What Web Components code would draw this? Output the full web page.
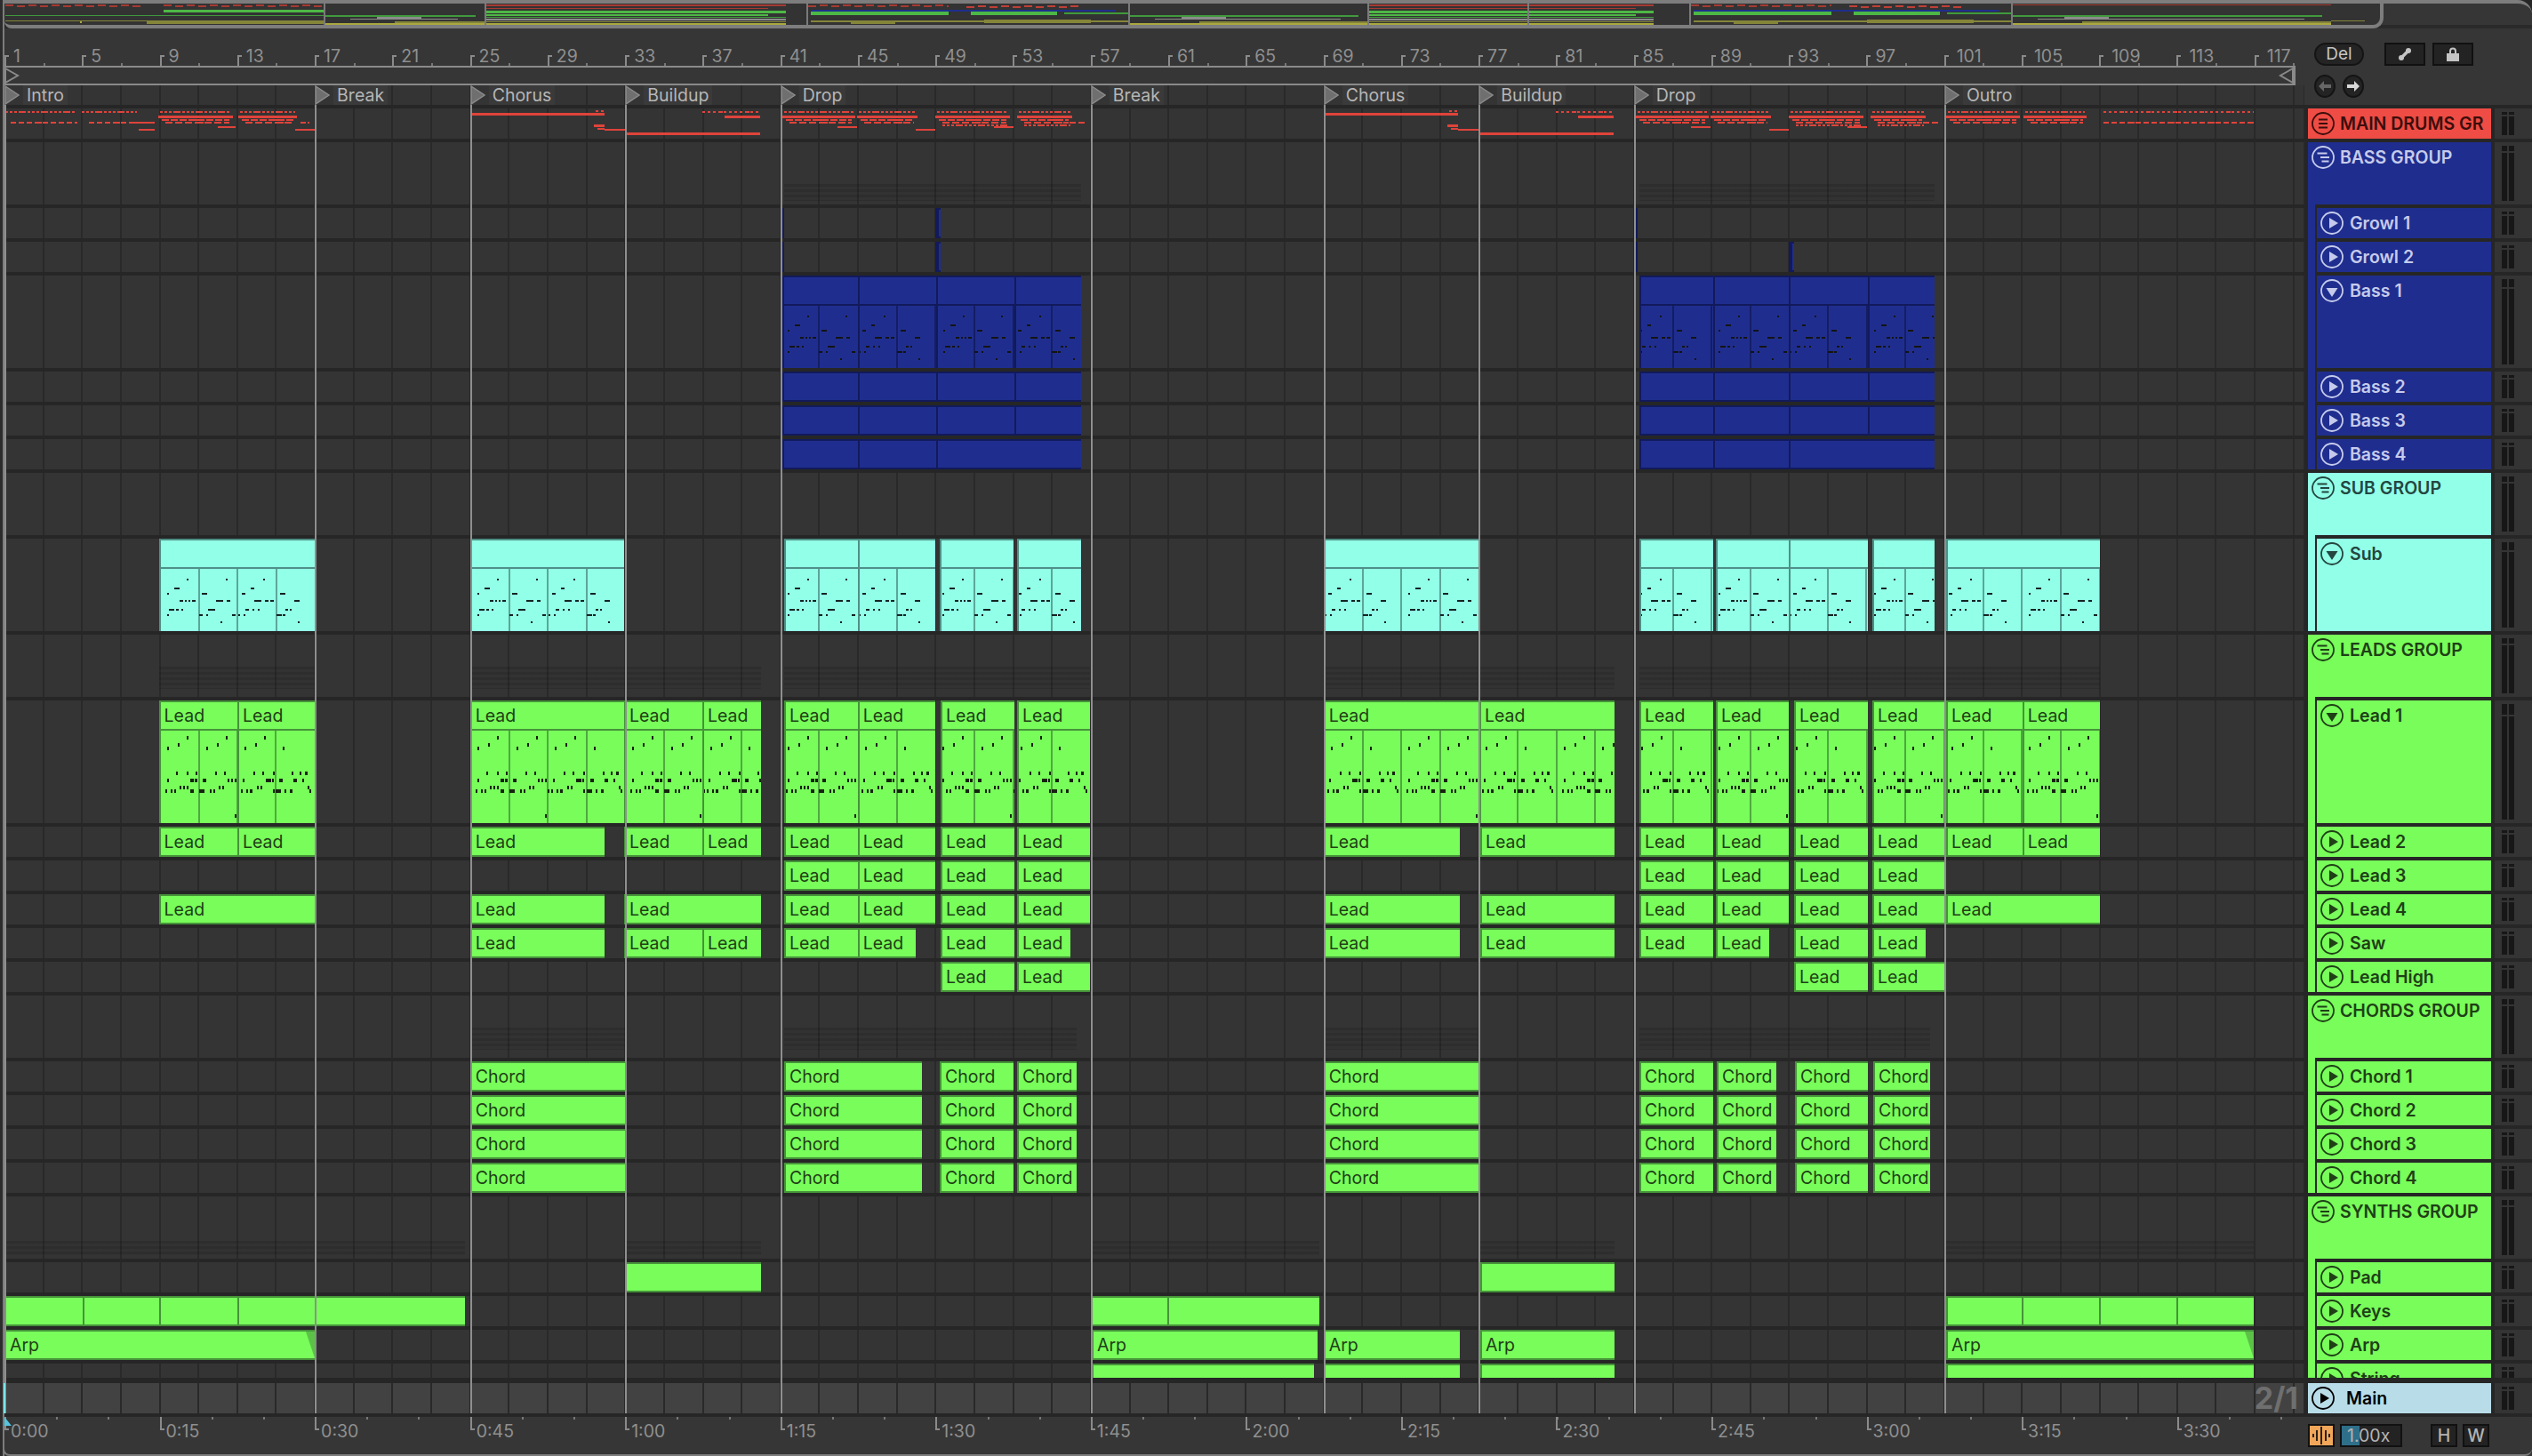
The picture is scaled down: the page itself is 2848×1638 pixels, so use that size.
<!doctype html>
<html>
<head>
<meta charset="utf-8">
<title>Arrangement</title>
<style>
  html, body { margin: 0; background: #2e2e2e; }
</style>
</head>
<body>
<live-arrangement></live-arrangement>
<script>
(function () {
  const BAR = 21.82;
  const STEP = BAR * 2;
  const LEFT = 5;
  const SVG = 'http://www.w3.org/2000/svg';

  const rects = (list) =>
    list.map(([x, y, w, h, c]) => `<rect x="${x}" y="${y}" width="${w}" height="${h}"${c ? ` fill="${c}"` : ''}/>`).join('');

  // note rows of the two midi patterns, one list for every 2 bars: [x, y, width]
  const PATTERNS = {
    lead: {
      h: 4,
      sections: [
        [[30,6,2],[20,14,2],[8,18,2],[18,46,2],[30,46,2],[40,46,2],[8,54,2],[34,54,4],[39,54,3],[22,62,2],[26,62,2],[30,62,2],[6,66,2],[12,66,2],[16,66,2],[34,66,4]],
        [[30,6,2],[20,14,2],[8,18,2],[18,46,2],[28,46,2],[4,54,4],[32,54,2],[36,54,2],[40,54,2],[22,62,2],[26,62,2],[0,66,6],[12,66,2],[16,66,2],[40,94,2]],
        [[30,6,2],[20,14,2],[8,18,2],[18,46,2],[28,46,2],[40,46,2],[6,54,2],[32,54,6],[39,54,2],[22,62,2],[26,62,2],[0,66,2],[4,66,2],[10,66,2],[14,66,3],[40,66,2]],
        [[8,18,2],[18,46,2],[27,46,2],[33,46,3],[4,54,4],[20,54,4],[30,54,2],[36,62,2],[0,66,6],[10,66,2],[16,66,3],[38,66,2]]
      ]
    },
    sub: {
      h: 2,
      sections: [
        [[30,11,2],[16,21,6],[8,27,2],[22,35,4],[28,35,2],[32,35,2],[36,35,4],[10,45,6],[18,45,3],[24,45,2],[8,51,2]],
        [[30,11,2],[3,27,6],[19,35,8],[31,35,4],[10,45,8],[0,51,4],[8,51,2],[37,51,4],[24,59,2]],
        [[29,11,2],[15,21,4],[5,27,4],[19,35,8],[31,35,4],[37,35,4],[9,45,4],[17,45,2],[23,45,2],[1,51,2],[7,51,2]],
        [[4,27,6],[20,35,6],[10,45,3],[15,45,2],[0,51,6],[7,51,3],[24,59,2]]
      ]
    }
  };

  const clipTemplate = document.createElement('template');
  clipTemplate.innerHTML = `
    <style>
      :host {
        position: absolute;
        top: 0;
        bottom: 0;
        box-sizing: border-box;
        display: flex;
        flex-direction: column;
        overflow: hidden;
        background: var(--clip);
        color: var(--ink);
        border-left: 2px solid var(--edge);
        border-top: 2px solid var(--edge);
        border-bottom: 2px solid var(--edge);
      }
      :host([notes]) { border-bottom: 0; }
      .title {
        height: 30px;
        flex: none;
        box-sizing: border-box;
        padding-left: 4px;
        font-size: 19.5px;
        line-height: 30px;
        white-space: nowrap;
      }
      :host([notes]) .title { border-bottom: 2px solid var(--edge); height: 32px; }
      .notes { flex: 1; position: relative; min-height: 0; display: none; }
      :host([notes]) .notes { display: block; }
      svg { position: absolute; left: 0; top: 0; width: 100%; height: 100%; shape-rendering: crispEdges; }
      .fade {
        display: none;
        position: absolute;
        right: 0;
        top: 0;
        bottom: 0;
        width: 10px;
        background: #5cc247;
        clip-path: polygon(0 0, 100% 0, 100% 100%);
      }
      :host([fade]) .fade { display: block; }
    </style>
    <div class="title"></div>
    <div class="notes"></div>
    <div class="fade"></div>
  `;

  class ArrClip extends HTMLElement {
    constructor() {
      super();
      this.attachShadow({ mode: 'open' });
      this.shadowRoot.append(clipTemplate.content.cloneNode(true));
    }

    connectedCallback() {
      const x = Number(this.getAttribute('x'));
      const end = Number(this.getAttribute('end'));
      this.style.left = x - LEFT + 'px';
      this.style.width = end - x + 'px';
      this.shadowRoot.querySelector('.title').textContent = this.getAttribute('label') || '';
      if (this.hasAttribute('notes')) this._drawNotes(x, end);
    }

    _drawNotes(x, end) {
      const pattern = PATTERNS[this.getAttribute('notes')];
      let lines = '';
      let notes = '';
      const first = Math.floor((x - LEFT) / STEP);
      const last = Math.ceil((end - LEFT) / STEP);
      for (let k = first; k < last; k++) {
        const at = LEFT + k * STEP - x - 2;
        if (at > 2) lines += rects([[at - 1, 0, 2, 200]]);
        pattern.sections[k % 4].forEach(([nx, ny, nw]) => {
          notes += rects([[at + nx, ny, nw, pattern.h]]);
        });
      }
      this.shadowRoot.querySelector('.notes').innerHTML =
        `<svg xmlns="${SVG}"><g fill="var(--edge)" opacity="0.8">${lines}</g><g fill="var(--note)">${notes}</g></svg>`;
    }
  }

  const bandTemplate = document.createElement('template');
  bandTemplate.innerHTML = `
    <style>
      :host {
        position: absolute;
        background: repeating-linear-gradient(180deg, rgba(0, 0, 0, 0.13) 0 3px, rgba(0, 0, 0, 0.03) 3px 6px);
      }
    </style>
  `;

  // the faint preview of folded clips in a group track
  class GroupBand extends HTMLElement {
    constructor() {
      super();
      this.attachShadow({ mode: 'open' });
      this.shadowRoot.append(bandTemplate.content.cloneNode(true));
    }

    connectedCallback() {
      const x = Number(this.getAttribute('x'));
      this.style.left = x - LEFT + 'px';
      this.style.width = Number(this.getAttribute('end')) - x + 'px';
      this.style.top = this.getAttribute('top') + 'px';
      this.style.height = this.getAttribute('span') + 'px';
    }
  }

  const ICONS = {
    lines: '<path d="M8 8.5h10M8 13h10M8 17.5h10" stroke-width="2.2"/>',
    tree: '<path d="M6.5 8.5h11M10 13h10M11.5 17.5h8" stroke-width="2"/>',
    play: '<path d="M10 7l10 6-10 6z" fill="currentColor" stroke="none"/>',
    down: '<path d="M6.5 10h13L13 20z" fill="currentColor" stroke="none"/>'
  };

  const rowTemplate = document.createElement('template');
  rowTemplate.innerHTML = `
    <style>
      :host {
        display: flex;
        flex: none;
        gap: 4px;
      }
      .lane {
        position: relative;
        flex: 1;
        display: flex;
        justify-content: flex-end;
        align-items: center;
        background: repeating-linear-gradient(90deg, #292929 0 2px, transparent 2px ${STEP}px) -1px 0, var(--lane, #343434);
      }
      .head {
        width: 206px;
        flex: none;
        display: flex;
      }
      .stripe { display: none; width: 8px; margin-top: -4px; background: var(--group); }
      :host([child]) .stripe { display: block; }
      .body {
        flex: 1;
        box-sizing: border-box;
        display: flex;
        align-items: flex-start;
        gap: 6px;
        padding: 4px 0 0 4px;
        background: var(--clip);
        color: var(--ink);
        font-size: 19.5px;
        font-weight: 600;
        line-height: 26px;
        white-space: nowrap;
        overflow: hidden;
      }
      :host([child]) .body { margin-left: 2px; gap: 7px; }
      :host([spaced]) .body { gap: 13px; }
      svg.icon { width: 26px; height: 26px; flex: none; fill: none; stroke: currentColor; }
      .meter {
        width: 42px;
        flex: none;
        box-sizing: border-box;
        display: flex;
        gap: 2px;
        padding: 4px 0 4px 8px;
        background: #343434;
      }
      .bar { width: 6px; display: flex; flex-direction: column; gap: 2px; }
      .bar i { display: block; background: #171717; height: var(--nub, 3px); }
      .bar b { display: block; background: #171717; flex: 1; }
    </style>
    <div class="lane"><slot></slot></div>
    <div class="head">
      <div class="stripe"></div>
      <div class="body">
        <svg class="icon" viewBox="0 0 26 26"><circle cx="13" cy="13" r="12" stroke-width="1.8"/><g class="glyph"></g></svg>
        <span class="name"></span>
      </div>
    </div>
    <div class="meter">
      <div class="bar"><i></i><b></b></div>
      <div class="bar"><i></i><b></b></div>
    </div>
  `;

  class TrackRow extends HTMLElement {
    constructor() {
      super();
      this.attachShadow({ mode: 'open' });
      this.shadowRoot.append(rowTemplate.content.cloneNode(true));
    }

    connectedCallback() {
      const h = Number(this.getAttribute('h'));
      this.style.height = h + 'px';
      this.style.setProperty('--nub', Math.max(3, Math.round(h * 0.085)) + 'px');
      this.shadowRoot.querySelector('.name').textContent = this.getAttribute('name');
      this.shadowRoot.querySelector('.glyph').innerHTML = ICONS[this.getAttribute('icon')];
    }
  }

  const THEMES = {
    red: { clip: '#ee4c44', edge: '#a8322c', ink: '#3b0e0c', note: '#111' },
    blue: { clip: '#1f2e8e', edge: '#121a5c', ink: '#c6cbec', note: '#141414' },
    cyan: { clip: '#92ffe8', edge: '#4f9085', ink: '#24463f', note: '#142320' },
    green: { clip: '#78fd5a', edge: '#46933a', ink: '#1f3f16', note: '#14230f' }
  };

  const seg = (list, label, extra) => list.map(([x, end, own]) => ({ x, end, label: own === undefined ? label : own, ...extra }));

  const DROP1 = [[882, 964.7], [964.7, 1052.3], [1058, 1140.7], [1144, 1226]];
  const DROP2 = [[1844, 1926.5], [1930, 2012.4], [2018, 2100.6], [2106, 2189]];
  const OUTRO = [[2189, 2274.8], [2274.8, 2362]];
  const BASS_ALL = [[880, 965], [965, 1052.7], [1052.7, 1141], [1141, 1216], [1844, 1927], [1927, 2012], [2012, 2101], [2101, 2176]];
  const SUB = [[178.6, 354], [528.7, 702], [882, 965], [965, 1052], [1057, 1140], [1144, 1216], [1488.7, 1663], [1844, 1926.5], [1930, 2012.4], [2012.4, 2100.6], [2106, 2176], [2189, 2362]];
  const CHORD = [[528.7, 703], [882, 1037], [1057, 1140], [1144, 1211], [1488.7, 1663], [1844, 1927], [1931, 1998], [2019, 2101], [2107, 2171]];
  const STUBS = [[880, 882], [1052, 1054], [1054, 1058], [1840, 1842]];
  const STUBS2 = [...STUBS, [2012, 2014], [2014, 2018]];
  const LEAD_INTRO = [[178.6, 267], [267, 354]];
  const BUILD = [[702, 790], [790, 856]];

  const bands = (ranges, top, span) => ranges.map(([x, end]) => ({ x, end, top, span }));

  const TRACKS = [
    { name: 'MAIN DRUMS GR', h: 34, theme: 'red', icon: 'lines', drums: true },
    { name: 'BASS GROUP', h: 70, theme: 'blue', icon: 'tree', bands: bands([[882, 1216], [1844, 2176]], 47, 19) },
    { name: 'Growl 1', h: 34, theme: 'blue', icon: 'play', child: 1, clips: seg(STUBS) },
    { name: 'Growl 2', h: 34, theme: 'blue', icon: 'play', child: 1, clips: seg(STUBS2) },
    { name: 'Bass 1', h: 104, theme: 'blue', icon: 'down', child: 1, clips: seg(BASS_ALL, '', { notes: 'sub' }) },
    { name: 'Bass 2', h: 34, theme: 'blue', icon: 'play', child: 1, clips: seg(BASS_ALL) },
    { name: 'Bass 3', h: 34, theme: 'blue', icon: 'play', child: 1, clips: seg(BASS_ALL) },
    { name: 'Bass 4', h: 34, theme: 'blue', icon: 'play', child: 1, clips: seg([[880, 965], [965, 1052.7], [1052.7, 1216], [1844, 1927], [1927, 2012], [2012, 2176]]) },
    { name: 'SUB GROUP', h: 70, theme: 'cyan', icon: 'tree' },
    { name: 'Sub', h: 104, theme: 'cyan', icon: 'down', child: 1, clips: seg(SUB, '', { notes: 'sub' }) },
    { name: 'LEADS GROUP', h: 70, theme: 'green', icon: 'tree', bands: bands([[178.6, 354], [530, 856], [882, 1226], [1490, 1816], [1844, 2362]], 36, 25) },
    { name: 'Lead 1', h: 138, theme: 'green', icon: 'down', child: 1, clips: seg([...LEAD_INTRO, [528.7, 702], ...BUILD, ...DROP1, [1488.7, 1663], [1664, 1816], ...DROP2, ...OUTRO], 'Lead', { notes: 'lead' }) },
    { name: 'Lead 2', h: 34, theme: 'green', icon: 'play', child: 1, clips: seg([...LEAD_INTRO, [528.7, 680], ...BUILD, ...DROP1, [1488.7, 1642], [1665, 1816], ...DROP2, ...OUTRO], 'Lead') },
    { name: 'Lead 3', h: 34, theme: 'green', icon: 'play', child: 1, clips: seg([...DROP1, ...DROP2], 'Lead') },
    { name: 'Lead 4', h: 34, theme: 'green', icon: 'play', child: 1, clips: seg([[178.6, 354], [528.7, 680], [702, 856], ...DROP1, [1488.7, 1642], [1665, 1816], ...DROP2, [2189, 2362]], 'Lead') },
    { name: 'Saw', h: 34, theme: 'green', icon: 'play', child: 1, clips: seg([[528.7, 680], ...BUILD, [882, 964.7], [964.7, 1030], [1058, 1140.7], [1144, 1204], [1488.7, 1642], [1665, 1816], [1844, 1926.5], [1930, 1990], [2018, 2100.6], [2106, 2166]], 'Lead') },
    { name: 'Lead High', h: 34, theme: 'green', icon: 'play', child: 1, clips: seg([[1058, 1140.7], [1144, 1226], [2018, 2100.6], [2106, 2189]], 'Lead') },
    { name: 'CHORDS GROUP', h: 70, theme: 'green', icon: 'tree', bands: bands([[530, 703], [882, 1211], [1490, 1663], [1844, 2171]], 36, 25) },
    { name: 'Chord 1', h: 34, theme: 'green', icon: 'play', child: 1, clips: seg(CHORD, 'Chord') },
    { name: 'Chord 2', h: 34, theme: 'green', icon: 'play', child: 1, clips: seg(CHORD, 'Chord') },
    { name: 'Chord 3', h: 34, theme: 'green', icon: 'play', child: 1, clips: seg(CHORD, 'Chord') },
    { name: 'Chord 4', h: 34, theme: 'green', icon: 'play', child: 1, clips: seg(CHORD, 'Chord') },
    { name: 'SYNTHS GROUP', h: 70, theme: 'green', icon: 'tree', bands: bands([[5, 523], [703, 856], [1228, 1484], [1665, 1816], [2189, 2535]], 50, 16) },
    { name: 'Pad', h: 34, theme: 'green', icon: 'play', child: 1, clips: seg([[703, 856], [1665, 1816]]) },
    { name: 'Keys', h: 34, theme: 'green', icon: 'play', child: 1, clips: seg([[5, 93], [93, 179], [179, 267], [267, 523], [1227, 1313], [1313, 1484], [2189, 2274], [2274, 2361], [2361, 2448], [2448, 2535]]) },
    { name: 'Arp', h: 34, theme: 'green', icon: 'play', child: 1, clips: [
      ...seg([[5, 354]], 'Arp', { fade: 1 }),
      ...seg([[1228, 1482, 'Arp']], 'Arp'),
      ...seg([[1488.7, 1642], [1665, 1816]], 'Arp'),
      ...seg([[2189, 2535]], 'Arp', { fade: 1 })
    ] },
    { name: 'String', h: 34, theme: 'green', icon: 'play', child: 1, clips: seg([[1228, 1478], [1488.7, 1642], [1665, 1816], [2189, 2535]]) }
  ];

  const drumTemplate = document.createElement('template');
  drumTemplate.innerHTML = `
    <style>
      :host { position: absolute; left: 0; top: 0; width: 100%; height: 100%; }
      svg { display: block; width: 100%; height: 100%; shape-rendering: crispEdges; }
    </style>
    <svg xmlns="${SVG}" fill="#df433b"></svg>
  `;

  class DrumPreview extends HTMLElement {
    constructor() {
      super();
      this.attachShadow({ mode: 'open' });
      this.shadowRoot.append(drumTemplate.content.cloneNode(true));
    }

    connectedCallback() {
      const out = [];
      const line = (x0, x1, y, h = 2) => out.push([x0 - LEFT, y, x1 - x0, h]);
      const dash = (x0, x1, y, on, off) => {
        for (let x = x0, i = 0; x < x1; x += on + off, i++) {
          const w = i % 5 === 3 ? on + 2 : on;
          line(x, Math.min(x + w, x1), y);
        }
      };
      const dense = (x0, x1) => {
        dash(x0 + 2, x1, 3, 3, 2);
        line(x0, x1 + 2, 8, 3);
        dash(x0 + 4, x1 - 2, 12, 8, 2);
        dash(x0 + 8, x1 - 2, 15, 8, 3);
      };
      const drop = (by) => {
        [[880, 960], [964, 1030]].forEach(([a, b]) => dense(a + by, b + by));
        [[1052, 1134], [1144, 1204]].forEach(([a, b]) => {
          dense(a + by, b + by);
          dash(a + 8 + by, b + by, 18, 3, 2);
        });
        line(942 + by, 964 + by, 20);
        line(1030 + by, 1052 + by, 23);
        line(1118 + by, 1140 + by, 20);
        dash(1203 + by, 1222 + by, 15, 7, 3);
      };
      const chorus = (by) => {
        line(530 + by, 680 + by, 5, 3);
        dash(670 + by, 682 + by, 2, 3, 3);
        line(668 + by, 680 + by, 18, 3);
        line(672 + by, 680 + by, 22, 2);
        line(680 + by, 703 + by, 23);
        line(705 + by, 855 + by, 27, 3);
        dash(790 + by, 855 + by, 3, 3, 3);
        line(815 + by, 855 + by, 8, 3);
      };
      dash(6, 84, 3, 3, 2);
      dash(92, 154, 3, 3, 2);
      dash(12, 87, 15, 6, 3);
      dash(100, 156, 15, 6, 3);
      line(145, 174, 15);
      line(156, 174, 23);
      [[178, 260], [268, 332]].forEach(([a, b]) => dense(a, b));
      line(245, 265, 20);
      line(332, 354, 23);
      dash(338, 348, 15, 6, 2);
      chorus(0);
      drop(0);
      chorus(960);
      drop(960);
      dense(2189, 2270);
      dense(2276, 2345);
      dash(2366, 2535, 3, 3, 3);
      dash(2366, 2535, 15, 6, 3);
      this.shadowRoot.querySelector('svg').innerHTML = rects(out);
    }
  }

  const listTemplate = document.createElement('template');
  listTemplate.innerHTML = `
    <style>
      :host {
        display: block;
        box-sizing: border-box;
        height: 1438px;
        padding: 4px 0 6px;
      }
      .scroll {
        height: 100%;
        overflow: hidden;
        display: flex;
        flex-direction: column;
        gap: 4px;
      }
    </style>
    <div class="scroll"></div>
  `;

  class TrackList extends HTMLElement {
    constructor() {
      super();
      this.attachShadow({ mode: 'open' });
      this.shadowRoot.append(listTemplate.content.cloneNode(true));
    }

    connectedCallback() {
      const scroll = this.shadowRoot.querySelector('.scroll');
      let group = null;
      TRACKS.forEach((t) => {
        const theme = THEMES[t.theme];
        const row = document.createElement('track-row');
        if (!t.child) group = theme;
        row.setAttribute('name', t.name);
        row.setAttribute('h', t.h);
        row.setAttribute('icon', t.icon);
        if (t.child) row.setAttribute('child', '');
        row.style.setProperty('--clip', theme.clip);
        row.style.setProperty('--edge', theme.edge);
        row.style.setProperty('--ink', theme.ink);
        row.style.setProperty('--note', theme.note);
        row.style.setProperty('--group', group.clip);
        (t.bands || []).forEach((b) => {
          const band = document.createElement('group-band');
          Object.entries(b).forEach(([k, v]) => band.setAttribute(k, v));
          row.append(band);
        });
        (t.clips || []).forEach((c) => {
          const clip = document.createElement('arr-clip');
          clip.setAttribute('x', c.x);
          clip.setAttribute('end', c.end);
          if (c.label) clip.setAttribute('label', c.label);
          if (c.notes) clip.setAttribute('notes', c.notes);
          if (c.fade) clip.setAttribute('fade', '');
          row.append(clip);
        });
        if (t.drums) row.append(document.createElement('drum-preview'));
        scroll.append(row);
      });
    }
  }

  const overviewTemplate = document.createElement('template');
  overviewTemplate.innerHTML = `
    <style>
      :host {
        display: block;
        box-sizing: border-box;
        height: 32px;
        border-top: 4px solid #7d7d7d;
        border-top-right-radius: 16px;
        background: linear-gradient(180deg, #363636 0 24px, #2a2a2a 24px);
      }
      .frame {
        box-sizing: border-box;
        width: 2676px;
        height: 28px;
        background: #333;
        border: solid #7d7d7d;
        border-width: 0 4px 4px 0;
        border-radius: 0 0 12px 8px;
      }
      svg { display: block; width: 100%; height: 24px; shape-rendering: crispEdges; }
    </style>
    <div class="frame"><svg xmlns="${SVG}"></svg></div>
  `;

  class OverviewStrip extends HTMLElement {
    constructor() {
      super();
      this.attachShadow({ mode: 'open' });
      this.shadowRoot.append(overviewTemplate.content.cloneNode(true));
    }

    connectedCallback() {
      const R = '#a63a33';
      const G = '#4db846';
      const T = '#3f9a3c';
      const A = '#8c8c8c';
      const O = '#85853a';
      const Y = '#a9a83f';
      const B = '#1f2e8e';
      const out = [];
      const add = (x0, x1, y, h, c) => out.push([x0 - 5, y, x1 - x0, h, c]);
      const speckle = (x0, x1, y, c) => {
        for (let x = x0; x < x1; x += 13) add(x, Math.min(x + 9, x1), y + (x % 2), 2, c);
      };
      // intro and the two chorus blocks
      speckle(6, 160, 1, R);
      speckle(184, 364, 1, R);
      add(6, 364, 13, 1, T);
      add(184, 364, 7, 3, G);
      add(6, 364, 19, 1, O);
      add(165, 364, 20, 3, O);
      add(90, 92, 20, 2, Y);
      [[545, 884], [1538, 1860]].forEach(([a, b]) => {
        add(a, b, 1, 2, R);
        add(a, b - 20, 5, 1, R);
        add(a, b, 8, 3, G);
        add(a, b - 20, 12, 2, G);
        add(a, b, 15, 1, T);
        add(a, b, 17, 2, A);
        add(a, b, 20, 1, O);
        add(a, b, 22, 2, Y);
      });
      // the drops
      [[907, 1269], [1900, 2262]].forEach(([a, b]) => {
        speckle(a + 2, a + 160, 1, R);
        speckle(a + 180, a + 310, 2, '#c03f38');
        add(a + 5, b - 14, 7, 2, B);
        add(a + 5, a + 160, 9, 4, G);
        add(a + 185, b - 80, 9, 4, G);
        add(a + 290, b, 10, 2, T);
        add(a + 5, b, 19, 2, O);
        add(a + 50, a + 100, 20, 3, O);
        add(a + 200, a + 320, 18, 4, O);
      });
      // breaks and outro
      [[364, 545], [1269, 1538], [2262, 2622]].forEach(([a, b]) => {
        add(a, b - 10, 13, 2, T);
        add(a + 60, a + 110, 15, 2, A);
        add(a, b, 22, 2, Y);
        add(a + 80, b, 20, 2, O);
        add(a + 30, b - 30, 17, 1, A);
      });
      add(2262, 2622, 1, 1, R);
      add(2622, 2660, 19, 1, O);
      const marks = [364, 545, 907, 1269, 1538, 1718, 1900, 2262].map((x) => [x - 5, 0, 2, 24, '#7a7a7a']);
      this.shadowRoot.querySelector('svg').innerHTML = rects(out) + rects(marks);
    }
  }

  const headTemplate = document.createElement('template');
  headTemplate.innerHTML = `
    <style>
      :host { display: flex; height: 86px; background: #363636; font-size: 19.5px; }
      .timeline { width: 2587px; flex: none; }
      .ruler { height: 42px; display: flex; overflow: hidden; }
      .ruler div {
        flex: 0 0 ${BAR * 4}px;
        box-sizing: border-box;
        height: 42px;
        padding: 21px 0 0 10px;
        line-height: 20px;
        color: #8f8f8f;
        background:
          linear-gradient(#8a8a8a, #8a8a8a) 0 100% / 2px 12px no-repeat,
          linear-gradient(#8a8a8a, #8a8a8a) 0 30px / 5px 2px no-repeat,
          linear-gradient(#777, #777) ${STEP}px 100% / 2px 3px no-repeat;
      }
      .ruler div.wide { padding-left: 14px; }
      .scrub {
        box-sizing: border-box;
        width: 2577px;
        height: 22px;
        border: solid #8a8a8a;
        border-width: 2px 2px 2px 0;
        display: flex;
        justify-content: space-between;
      }
      .scrub svg { width: 18px; height: 18px; fill: none; stroke: #8a8a8a; stroke-width: 2; }
      .locators {
        height: 22px;
        display: flex;
        background: repeating-linear-gradient(90deg, #292929 0 2px, transparent 2px ${STEP}px) -1px 0, #343434;
        overflow: hidden;
      }
      .locators div { display: flex; align-items: center; gap: 4px; flex: none; }
      .locators svg { width: 17px; height: 22px; fill: #6f6f6f; stroke: #8c8c8c; stroke-width: 1.5; flex: none; }
      .locators span { background: #3a3a3a; color: #b6b6b6; padding: 0 4px; line-height: 22px; }
      .controls {
        flex: 1;
        box-sizing: border-box;
        padding: 16px 0 0 11px;
        display: grid;
        grid-template-columns: 56px 46px 46px;
        column-gap: 23px;
        grid-auto-rows: min-content;
        row-gap: 10px;
      }
      .controls > :nth-child(3) { margin-left: -15px; width: 46px; }
      .del {
        height: 26px;
        box-sizing: border-box;
        border: 2px solid #141414;
        border-radius: 13px;
        background: #242424;
        color: #c4c4c4;
        text-align: center;
        line-height: 22px;
        font-size: 19px;
      }
      .btn {
        height: 26px;
        box-sizing: border-box;
        border: 2px solid #111;
        background: #232323;
        display: flex;
        align-items: center;
        justify-content: center;
      }
      .btn svg { width: 20px; height: 20px; fill: #c4c4c4; }
      .nav { display: flex; gap: 8px; grid-column: 1 / 3; }
      .nav div {
        width: 24px;
        height: 26px;
        box-sizing: border-box;
        border: 2px solid #141414;
        border-radius: 50%;
        background: #242424;
        display: flex;
        align-items: center;
        justify-content: center;
      }
      .nav svg { width: 16px; height: 16px; }
    </style>
    <div class="timeline">
      <div class="ruler"></div>
      <div class="scrub">
        <svg viewBox="0 0 18 18"><path d="M1 1l14 8-14 8z"/></svg>
        <svg viewBox="0 0 18 18"><path d="M17 1L3 9l14 8z"/></svg>
      </div>
      <div class="locators"></div>
    </div>
    <div class="controls">
      <div class="del">Del</div>
      <div class="btn"><svg viewBox="0 0 20 20"><path d="M5 12.5l7.5-7.5 2.5 2.5-7.5 7.5z"/><circle cx="14" cy="6" r="3"/><circle cx="6" cy="14" r="3"/></svg></div>
      <div class="btn"><svg viewBox="0 0 20 20"><path d="M3 9h14v9H3z"/><path d="M6 9V6.5a4 4 0 0 1 8 0V9h-2V6.5a2 2 0 0 0-4 0V9z"/></svg></div>
      <div class="nav">
        <div><svg viewBox="0 0 16 16"><path d="M1 8l6-6v4h8v4H7v4z" fill="#666"/></svg></div>
        <div><svg viewBox="0 0 16 16"><path d="M15 8L9 2v4H1v4h8v4z" fill="#d8d8d8"/></svg></div>
      </div>
    </div>
  `;

  const LOCATORS = [['Intro', 16], ['Break', 8], ['Chorus', 8], ['Buildup', 8], ['Drop', 16], ['Break', 12], ['Chorus', 8], ['Buildup', 8], ['Drop', 16], ['Outro', 20]];

  class ArrangeHead extends HTMLElement {
    constructor() {
      super();
      this.attachShadow({ mode: 'open' });
      this.shadowRoot.append(headTemplate.content.cloneNode(true));
    }

    connectedCallback() {
      const ruler = this.shadowRoot.querySelector('.ruler');
      for (let bar = 1; bar <= 117; bar += 4) {
        const cell = document.createElement('div');
        cell.textContent = bar;
        if (bar > 99) cell.className = 'wide';
        ruler.append(cell);
      }
      const row = this.shadowRoot.querySelector('.locators');
      LOCATORS.forEach(([name, bars]) => {
        const flag = document.createElement('div');
        flag.style.width = bars * BAR + 'px';
        flag.innerHTML = `<svg viewBox="0 0 17 22"><path d="M1 1l15 10L1 21z"/></svg><span>${name}</span>`;
        row.append(flag);
      });
    }
  }

  const linesTemplate = document.createElement('template');
  linesTemplate.innerHTML = `
    <style>
      :host {
        position: absolute;
        left: 0;
        top: 0;
        bottom: 0;
        width: 2587px;
        display: flex;
        pointer-events: none;
        z-index: 2;
      }
      div { flex: none; box-sizing: border-box; border-left: 2px solid #8f8f8f; }
      div:first-child { border-left-color: transparent; }
      .head { position: absolute; left: -1px; top: 1438px; width: 2px; height: 34px; background: #7fe3ea; border: 0; }
    </style>
  `;

  class LocatorLines extends HTMLElement {
    constructor() {
      super();
      this.attachShadow({ mode: 'open' });
      this.shadowRoot.append(linesTemplate.content.cloneNode(true));
    }

    connectedCallback() {
      LOCATORS.slice(0, 9).forEach(([, bars]) => {
        const line = document.createElement('div');
        line.style.width = bars * BAR + 'px';
        this.shadowRoot.append(line);
      });
      const last = document.createElement('div');
      last.style.flex = '1';
      this.shadowRoot.append(last);
      const head = document.createElement('div');
      head.className = 'head';
      this.shadowRoot.append(head);
    }
  }

  const footTemplate = document.createElement('template');
  footTemplate.innerHTML = `
    <style>
      :host { display: flex; height: 44px; background: #363636; font-size: 19.5px; position: relative; }
      .times {
        width: 2587px;
        flex: none;
        display: flex;
        overflow: hidden;
        background: repeating-linear-gradient(90deg, #777 0 2px, transparent 2px ${BAR * 8 / 3}px) 0 0 / 100% 3px no-repeat;
      }
      .times div {
        flex: 0 0 ${BAR * 8}px;
        box-sizing: border-box;
        padding: 5px 0 0 7px;
        line-height: 22px;
        color: #8f8f8f;
        background:
          linear-gradient(#8a8a8a, #8a8a8a) 0 0 / 2px 15px no-repeat,
          linear-gradient(#8a8a8a, #8a8a8a) 0 13px / 5px 2px no-repeat;
      }
      .playhead {
        position: absolute;
        left: 0;
        top: 0;
        width: 8px;
        height: 10px;
        background: #55c4dc;
        clip-path: polygon(0 0, 100% 100%, 0 100%);
      }
      .tools {
        flex: 1;
        display: flex;
        align-items: flex-start;
        padding: 8px 0 0 4px;
      }
      .wave {
        width: 30px;
        height: 26px;
        box-sizing: border-box;
        border: 2px solid #111;
        background: #f2a65a;
        display: flex;
        align-items: center;
        justify-content: center;
      }
      .wave svg { width: 22px; height: 20px; fill: #2a2218; }
      .speed {
        width: 70px;
        height: 26px;
        margin-left: 6px;
        box-sizing: border-box;
        border: 2px solid #111;
        background: linear-gradient(90deg, #2e6f8a 0 20px, #232323 20px);
        color: #b4b4b4;
        line-height: 22px;
        padding-left: 6px;
      }
      .key {
        width: 30px;
        height: 26px;
        box-sizing: border-box;
        border: 2px solid #111;
        background: #232323;
        color: #b4b4b4;
        text-align: center;
        line-height: 22px;
        font-weight: 500;
      }
      .key.h { margin-left: 32px; }
      .key.w { margin-left: 6px; }
    </style>
    <div class="times"></div>
    <div class="playhead"></div>
    <div class="tools">
      <div class="wave"><svg viewBox="0 0 22 20"><path d="M1 8h2v4H1zM5 4h2v12H5zM10 0h2v20h-2zM15 4h2v12h-2zM19 8h2v4h-2z"/></svg></div>
      <div class="speed">1.00x</div>
      <div class="key h">H</div>
      <div class="key w">W</div>
    </div>
  `;

  class ArrangeFoot extends HTMLElement {
    constructor() {
      super();
      this.attachShadow({ mode: 'open' });
      this.shadowRoot.append(footTemplate.content.cloneNode(true));
    }

    connectedCallback() {
      const times = this.shadowRoot.querySelector('.times');
      for (let k = 0; k < 15; k++) {
        const seconds = k * 15;
        const cell = document.createElement('div');
        cell.textContent = Math.floor(seconds / 60) + ':' + String(seconds % 60).padStart(2, '0');
        times.append(cell);
      }
    }
  }

  const rootTemplate = document.createElement('template');
  rootTemplate.innerHTML = `
    <style>
      :host {
        display: block;
        box-sizing: border-box;
        width: 2848px;
        height: 1638px;
        padding-left: 5px;
        overflow: hidden;
        font-family: Inter, "Liberation Sans", sans-serif;
        background: linear-gradient(90deg, #2c2c2c 0 3px, #7d7d7d 3px 5px, #262626 5px);
        position: relative;
      }
      .stage { position: relative; background: #262626; }
      .gap { height: 4px; background: #262626; }
      .tempo {
        font-size: 34px;
        font-weight: 700;
        line-height: 34px;
        color: #6f6f6f;
        padding-right: 7px;
      }
      .edge {
        position: absolute;
        left: 3px;
        right: 0;
        bottom: 0;
        height: 8px;
        box-sizing: border-box;
        border: solid #7d7d7d;
        border-width: 0 0 2px 2px;
        border-radius: 0 0 8px 8px;
        pointer-events: none;
      }
    </style>
    <overview-strip></overview-strip>
    <arrange-head></arrange-head>
    <div class="stage">
      <track-list></track-list>
      <track-row id="main" name="Main" h="34" icon="play" spaced style="--lane:#424242;--clip:#b8dce8;--ink:#000">
        <span class="tempo">2/1</span>
      </track-row>
      <locator-lines></locator-lines>
    </div>
    <div class="gap"></div>
    <arrange-foot></arrange-foot>
    <div class="edge"></div>
  `;

  class LiveArrangement extends HTMLElement {
    constructor() {
      super();
      this.attachShadow({ mode: 'open' });
      this.shadowRoot.append(rootTemplate.content.cloneNode(true));
    }
  }

  customElements.define('arr-clip', ArrClip);
  customElements.define('group-band', GroupBand);
  customElements.define('drum-preview', DrumPreview);
  customElements.define('track-row', TrackRow);
  customElements.define('track-list', TrackList);
  customElements.define('overview-strip', OverviewStrip);
  customElements.define('arrange-head', ArrangeHead);
  customElements.define('locator-lines', LocatorLines);
  customElements.define('arrange-foot', ArrangeFoot);
  customElements.define('live-arrangement', LiveArrangement);
})();
</script>
</body>
</html>
